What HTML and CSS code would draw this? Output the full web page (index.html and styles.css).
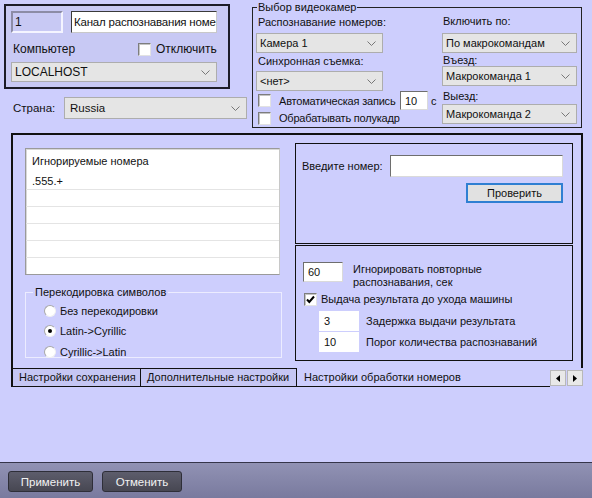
FILE: index.html
```html
<!DOCTYPE html>
<html>
<head>
<meta charset="utf-8">
<link rel="stylesheet" href="styles.css">
</head>
<body>
<div class="app">
  <div class="top">
    <div class="top-left">
      <div class="chanbox">
        <div class="row r1">
          <div class="field num">1</div>
          <div class="field name">Канал распознавания номе</div>
        </div>
        <div class="row r2">
          <span class="comp">Компьютер</span>
          <span class="chk"></span>
          <span class="chk-text">Отключить</span>
        </div>
        <div class="combo host"><span class="combo-text">LOCALHOST</span><svg class="chev" width="9" height="5" viewBox="0 0 9 5"><polyline points="0.5,0.5 4.5,4.5 8.5,0.5" fill="none" stroke="#777" stroke-width="1"/></svg></div>
      </div>
      <div class="row country">
        <span class="country-lbl">Страна:</span>
        <div class="combo country-combo"><span class="combo-text">Russia</span><svg class="chev" width="9" height="5" viewBox="0 0 9 5"><polyline points="0.5,0.5 4.5,4.5 8.5,0.5" fill="none" stroke="#777" stroke-width="1"/></svg></div>
      </div>
    </div>

    <div class="group cams">
      <div class="legend">Выбор видеокамер</div>
      <div class="cols">
        <div class="col cam-left">
          <div class="lbl l1">Распознавание номеров:</div>
          <div class="combo cam-combo c1"><span class="combo-text">Камера 1</span><svg class="chev" width="9" height="5" viewBox="0 0 9 5"><polyline points="0.5,0.5 4.5,4.5 8.5,0.5" fill="none" stroke="#777" stroke-width="1"/></svg></div>
          <div class="lbl l2">Синхронная съемка:</div>
          <div class="combo cam-combo c2"><span class="combo-text">&lt;нет&gt;</span><svg class="chev" width="9" height="5" viewBox="0 0 9 5"><polyline points="0.5,0.5 4.5,4.5 8.5,0.5" fill="none" stroke="#777" stroke-width="1"/></svg></div>
          <div class="row autorow">
            <span class="chk cam-chk"></span>
            <span class="auto-text">Автоматическая запись</span>
            <span class="inp sec-inp">10</span>
            <span class="sec">с</span>
          </div>
          <div class="row halfrow">
            <span class="chk cam-chk"></span>
            <span class="auto-text">Обрабатывать полукадр</span>
          </div>
        </div>
        <div class="col cam-right">
          <div class="lbl r-l1">Включить по:</div>
          <div class="combo rcombo rc1"><span class="combo-text">По макрокомандам</span><svg class="chev" width="9" height="5" viewBox="0 0 9 5"><polyline points="0.5,0.5 4.5,4.5 8.5,0.5" fill="none" stroke="#777" stroke-width="1"/></svg></div>
          <div class="lbl r-l2">Въезд:</div>
          <div class="combo rcombo rc2"><span class="combo-text">Макрокоманда 1</span><svg class="chev" width="9" height="5" viewBox="0 0 9 5"><polyline points="0.5,0.5 4.5,4.5 8.5,0.5" fill="none" stroke="#777" stroke-width="1"/></svg></div>
          <div class="lbl r-l3">Выезд:</div>
          <div class="combo rcombo rc3"><span class="combo-text">Макрокоманда 2</span><svg class="chev" width="9" height="5" viewBox="0 0 9 5"><polyline points="0.5,0.5 4.5,4.5 8.5,0.5" fill="none" stroke="#777" stroke-width="1"/></svg></div>
        </div>
      </div>
    </div>
  </div>

  <div class="tabctl">
    <div class="page">
      <div class="pcol pleft">
        <div class="list">
          <div class="list-head">Игнорируемые номера</div>
          <div class="list-row">.555.+</div>
          <div class="list-row"></div>
          <div class="list-row"></div>
          <div class="list-row"></div>
          <div class="list-row"></div>
          <div class="list-row"></div>
        </div>
        <div class="group recode">
          <div class="legend recode-legend">Перекодировка символов</div>
          <div class="row radio-row rr1"><span class="radio"></span><span class="radio-text">Без перекодировки</span></div>
          <div class="row radio-row rr2"><span class="radio on"></span><span class="radio-text">Latin-&gt;Cyrillic</span></div>
          <div class="row radio-row rr3"><span class="radio"></span><span class="radio-text">Cyrillic-&gt;Latin</span></div>
        </div>
      </div>
      <div class="pcol pright">
        <div class="box check">
          <div class="row num-row">
            <span class="num-lbl">Введите номер:</span>
            <span class="inp num-inp"></span>
          </div>
          <div class="row btn-row">
            <span class="btn-check">Проверить</span>
          </div>
        </div>
        <div class="box opts">
          <div class="row opt-row1">
            <span class="inp sixty">60</span>
            <span class="opt-text">Игнорировать повторные<br>распознавания, сек</span>
          </div>
          <div class="row opt-row2">
            <span class="chk checked"><svg width="11" height="11" viewBox="0 0 11 11"><polyline points="2,5.5 4.3,8 9,2.5" fill="none" stroke="#000" stroke-width="2"/></svg></span>
            <span class="opt-chk-text">Выдача результата до ухода машины</span>
          </div>
          <div class="row opt-row3">
            <span class="cell">3</span>
            <span class="cell-text">Задержка выдачи результата</span>
          </div>
          <div class="row opt-row4">
            <span class="cell">10</span>
            <span class="cell-text">Порог количества распознаваний</span>
          </div>
        </div>
      </div>
    </div>
    <div class="tabs">
      <div class="tab t1">Настройки сохранения</div>
      <div class="tab t2">Дополнительные настройки</div>
      <div class="tab active">Настройки обработки номеров</div>
      <div class="arrows">
        <span class="arrow"><svg width="4" height="7" viewBox="0 0 4 7"><polygon points="4,0 0,3.5 4,7" fill="#000"/></svg></span>
        <span class="arrow"><svg width="4" height="7" viewBox="0 0 4 7"><polygon points="0,0 4,3.5 0,7" fill="#000"/></svg></span>
      </div>
    </div>
  </div>

  <div class="spacer"></div>

  <div class="bottombar">
    <span class="btn apply">Применить</span>
    <span class="btn cancel">Отменить</span>
  </div>
</div>
</body>
</html>
```

FILE: styles.css
```css
* { box-sizing: border-box; }
html, body { margin: 0; padding: 0; }
body {
  font-family: "Liberation Sans", Arial, sans-serif;
  font-size: 11px;
  color: #111;
  background: #cdcefd;
}
.app {
  width: 592px;
  height: 498px;
  display: flex;
  flex-direction: column;
  overflow: hidden;
}
.row { display: flex; align-items: center; }

/* ---------- top area ---------- */
.top { display: flex; align-items: flex-start; height: 128px; flex: none; }
.top-left { margin: 4px 0 0 4px; width: 244px; }
.chanbox {
  width: 226px;
  border: 2px solid #1c1c28;
  background: #c8c9f4;
  padding: 5px 11px 5px 5px;
  font-size: 12px;
}
.r1 { height: 22px; gap: 8px; }
.field { height: 22px; display: flex; align-items: center; white-space: nowrap; overflow: hidden; }
.field.num {
  width: 52px;
  padding-left: 2px;
  border: 2px solid;
  border-color: #8c8ca6 #f4f4ff #f4f4ff #8c8ca6;
  background: #c8c9f4;
}
.field.name {
  width: 146px;
  padding-left: 2px;
  background: #fff;
  border: 1px solid #3a3a3a;
  border-right-color: #c8c8c8;
  border-bottom-color: #c8c8c8;
  font-size: 11.5px;
  letter-spacing: -0.2px;
}
.r2 { height: 14px; margin-top: 9px; }
.comp { width: 127px; padding-left: 2px; }
.chk {
  width: 13px;
  height: 13px;
  flex: none;
  background: #fff;
  border: 1px solid;
  border-color: #7d7d7d #e2e2e2 #e2e2e2 #7d7d7d;
  box-shadow: inset 1px 1px 0 #c4c4c4;
  display: flex;
  align-items: center;
  justify-content: center;
}
.chk-text { margin-left: 5px; }
.combo {
  display: flex;
  align-items: center;
  justify-content: space-between;
  height: 20px;
  background: #e5e5e5;
  border: 1px solid #adadad;
  padding: 0 6px 0 3px;
  white-space: nowrap;
}
.chev { flex: none; }
.host { margin-top: 6px; width: 206px; }
.country { margin-top: 8px; height: 22px; }
.country-lbl { width: 60px; padding-left: 9px; font-size: 11.5px; }
.country-combo { width: 183px; height: 22px; padding-left: 5px; font-size: 11.5px; }

/* camera group */
.group.cams {
  margin: 7px 0 0 4px;
  width: 330px;
  height: 121px;
  border: 1px solid #222;
  padding: 0 4px 0 3px;
}
.legend {
  display: block;
  width: max-content;
  height: 13px;
  line-height: 13px;
  margin: -7px 0 0 1px;
  padding: 0 1px;
  background: #cdcefd;
}
.cols { display: flex; }
.cam-left { width: 186px; }
.cam-right { width: 135px; }
.lbl { height: 13px; line-height: 13px; padding-left: 2px; white-space: nowrap; }
.l1 { margin-top: 2px; }
.cam-combo { width: 127px; }
.c1 { margin-top: 4px; }
.l2 { margin-top: 2px; }
.c2 { margin-top: 3px; }
.autorow { height: 19px; }
.cam-chk { margin-left: 2px; }
.auto-text { margin-left: 8px; width: 121px; white-space: nowrap; font-size: 11px; letter-spacing: -0.2px; }
.inp {
  background: #fff;
  border: 1px solid;
  border-color: #6e6e6e #dadada #dadada #6e6e6e;
  display: flex;
  align-items: center;
}
.sec-inp { width: 28px; height: 19px; padding-left: 4px; }
.sec { margin-left: 3px; }
.halfrow { height: 14px; margin-top: 1px; }
.r-l1 { margin-top: 1px; padding-left: 1px; }
.rcombo { width: 135px; }
.rc1 { margin-top: 5px; }
.r-l2 { margin-top: 1px; height: 12px; line-height: 12px; padding-left: 1px; }
.r-l3 { margin-top: 4px; height: 12px; line-height: 12px; padding-left: 1px; }
.rc3 { margin-top: 2px; }

/* ---------- tab control ---------- */
.tabctl { margin: 5px 0 0 11px; width: 572px; flex: none; }
.page {
  height: 235px;
  border: 2px solid #111;
  border-bottom: none;
  display: flex;
  align-items: flex-start;
  gap: 13px;
  padding: 8px 8px 0 12px;
}
.pleft { width: 257px; margin-top: 5px; }
.list {
  width: 255px;
  height: 127px;
  background: #fff;
  border: 1px solid #9a9a9a;
  border-right-color: #c8c8c8;
  box-shadow: inset 1px 1px 0 #d8d8d8;
  overflow: hidden;
}
.list-head { height: 24px; line-height: 24px; padding-left: 6px; }
.list-row { height: 17px; line-height: 16px; padding-left: 6px; border-bottom: 1px solid #e4e4e4; }
.group.recode {
  margin-top: 17px;
  width: 257px;
  height: 66px;
  border: 1px solid #ececff;
  padding-left: 18px;
}
.recode-legend { margin-left: -11px; padding: 0 2px; }
.radio-row { height: 13px; }
.rr1 { margin-top: 5px; }
.rr2 { margin-top: 7px; }
.rr3 { margin-top: 8px; }
.radio {
  width: 12px;
  height: 12px;
  border-radius: 50%;
  background: #fff;
  border: 1px solid;
  border-color: #a8a8a8 #f0f0f0 #f0f0f0 #a8a8a8;
  flex: none;
  display: flex;
  align-items: center;
  justify-content: center;
}
.radio.on::after {
  content: "";
  width: 4px;
  height: 4px;
  border-radius: 50%;
  background: #000;
}
.radio-text { margin-left: 4px; }

.pright { width: 278px; }
.box { border: 1px solid #111; }
.box.check { height: 101px; padding: 11px 9px 0 6px; }
.num-row { height: 22px; }
.num-lbl { width: 88px; }
.num-inp { width: 173px; height: 22px; }
.btn-row { margin-top: 6px; justify-content: flex-end; }
.btn-check {
  width: 97px;
  height: 20px;
  background: #e1e1e1;
  border: 2px solid #2f7fd2;
  display: flex;
  align-items: center;
  justify-content: center;
}
.box.opts { margin-top: 1px; height: 116px; padding: 16px 0 0 7px; }
.opt-row1 { align-items: flex-start; height: 20px; }
.sixty { width: 40px; height: 20px; padding-left: 4px; }
.opt-text { margin-left: 10px; line-height: 13px; margin-top: 1px; }
.opt-row2 { margin-top: 10px; height: 14px; }
.opt-row2 .chk { margin-left: 1px; }
.opt-chk-text { margin-left: 4px; }
.opt-row3 { margin-top: 5px; }
.opt-row4 { margin-top: 1px; }
.cell {
  width: 40px;
  height: 20px;
  margin-left: 16px;
  background: #fff;
  padding-left: 5px;
  display: flex;
  align-items: center;
}
.cell-text { margin-left: 7px; }

.tabs { display: flex; height: 19px; }
.tab {
  height: 19px;
  border-top: 1px solid #111;
  border-bottom: 1px solid #111;
  border-right: 1px solid #111;
  line-height: 17px;
  padding-left: 6px;
  background: #c5c6f3;
  white-space: nowrap;
  font-size: 11px;
}
.t1 { width: 130px; border-left: 2px solid #111; padding-left: 6px; }
.t2 { width: 156px; padding-left: 6px; }
.tab.active {
  flex: 1;
  border-top: none;
  border-right: none;
  background: #cdcefd;
  padding-left: 7px;
  line-height: 18px;
}
.arrows { display: flex; width: 33px; height: 16px; margin-top: 2px; }
.arrow {
  width: 16px;
  height: 16px;
  background: #e8e8e8;
  border: 1px solid #b8b8b8;
  display: flex;
  align-items: center;
  justify-content: center;
}
.arrow + .arrow { margin-left: 1px; }

/* ---------- bottom ---------- */
.spacer { flex: 1; }
.bottombar {
  height: 36px;
  flex: none;
  border-top: 1px solid #35354a;
  background: linear-gradient(#9192b4, #797a9e);
  display: flex;
  align-items: flex-start;
  padding: 8px 0 0 8px;
  gap: 9px;
}
.btn {
  height: 21px;
  border: 1px solid #2e2e38;
  border-radius: 3px;
  background: linear-gradient(#5d5d6c, #474752);
  color: #f2f2f2;
  display: flex;
  align-items: center;
  justify-content: center;
  font-size: 11.5px;
}
.apply { width: 85px; }
.cancel { width: 80px; }
```
